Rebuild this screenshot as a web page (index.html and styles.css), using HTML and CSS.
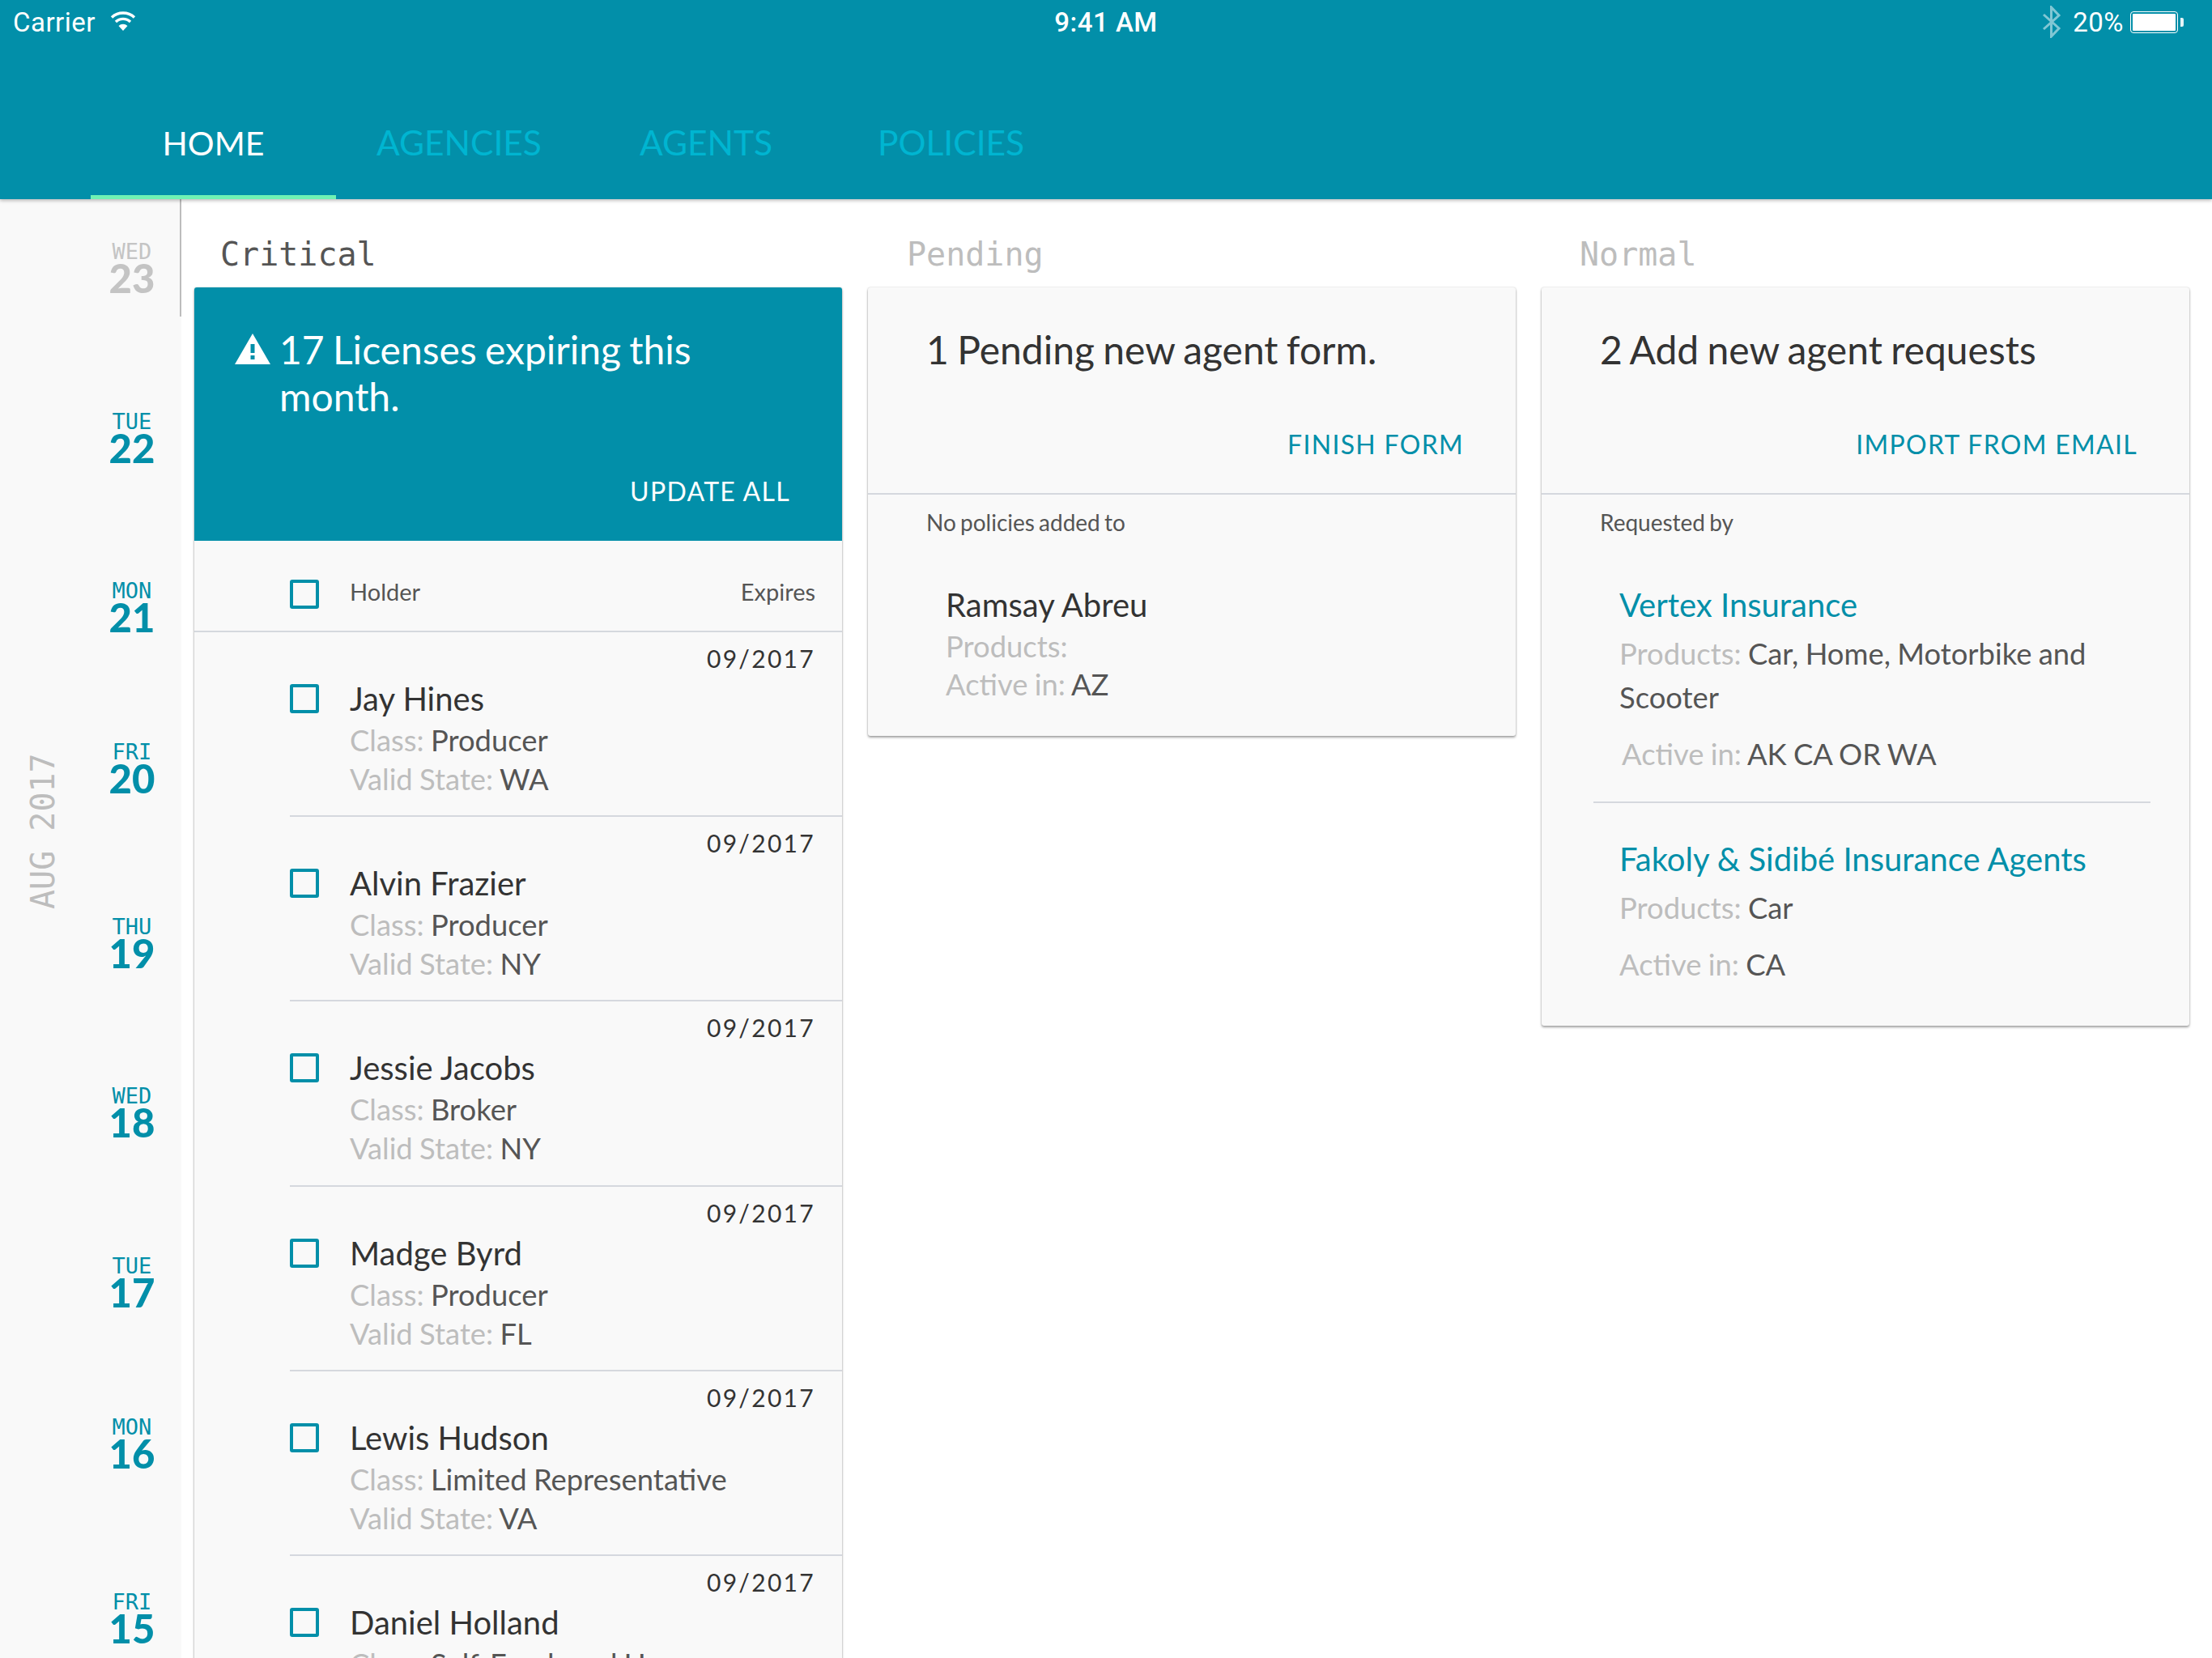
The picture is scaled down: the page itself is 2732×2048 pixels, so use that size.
FILE: index.html
```html
<!DOCTYPE html>
<html>
  <head>
    <meta name="viewport" content="width=device-width,initial-scale=1.0">
    <title>Home</title>
    <link rel="stylesheet" href="styles.css">
  </head>
  <body>
    <header class="topbar">
      <div class="status">
        <div class="status-left">
          <span>Carrier</span>
          <svg class="wifi" viewBox="0 0 32 24" width="32" height="24">
            <path d="M16 24 L10.5 18 A8 8 0 0 1 21.5 18 Z" fill="#fff"/>
            <path d="M7 13 A13 13 0 0 1 25 13" fill="none" stroke="#fff" stroke-width="3.4"/>
            <path d="M2 7.5 A20.5 20.5 0 0 1 30 7.5" fill="none" stroke="#fff" stroke-width="3.4"/>
          </svg>
        </div>
        <div class="status-time">9:41 AM</div>
        <div class="status-right">
          <svg class="bt" viewBox="0 0 24 40" width="24" height="40">
            <path d="M2 11 L21 28 L11.5 38 L11.5 2 L21 12 L2 29" fill="none" stroke="#fff" stroke-width="3"/>
          </svg>
          <span>20%</span>
          <div class="battery"><div class="battery-fill"></div></div>
          <div class="battery-nub"></div>
        </div>
      </div>
      <nav class="tabs">
        <a class="tab active">HOME</a>
        <a class="tab">AGENCIES</a>
        <a class="tab">AGENTS</a>
        <a class="tab">POLICIES</a>
      </nav>
    </header>

    <div class="main">
      <aside class="dates">
        <div class="month">AUG 2017</div>
        <div class="days">
          <div class="day past"><span>WED</span><b>23</b></div>
          <div class="day"><span>TUE</span><b>22</b></div>
          <div class="day"><span>MON</span><b>21</b></div>
          <div class="day"><span>FRI</span><b>20</b></div>
          <div class="day"><span>THU</span><b>19</b></div>
          <div class="day"><span>WED</span><b>18</b></div>
          <div class="day"><span>TUE</span><b>17</b></div>
          <div class="day"><span>MON</span><b>16</b></div>
          <div class="day"><span>FRI</span><b>15</b></div>
        </div>
      </aside>

      <div class="board">
        <section class="column">
          <h2 class="column-title critical">Critical</h2>
          <div class="card tall">
            <div class="card-head alert">
              <div class="head-title">
                <svg class="warn" viewBox="0 0 44 38" width="44" height="38">
                  <path d="M22 0 L44 38 L0 38 Z M19.5 13 L19.5 24 L24.5 24 L24.5 13 Z M19.5 27 L19.5 32 L24.5 32 L24.5 27 Z" fill="#fff" fill-rule="evenodd"/>
                </svg>
                <span>17 Licenses expiring this month.</span>
              </div>
              <a class="action">UPDATE ALL</a>
            </div>
            <div class="list-head">
              <i class="check"></i>
              <span class="holder">Holder</span>
              <span>Expires</span>
            </div>
            <div class="row">
              <div class="date">09/2017</div>
              <i class="check"></i>
              <div class="row-text">
                <div class="name">Jay Hines</div>
                <div class="meta"><em>Class:</em> Producer</div>
                <div class="meta"><em>Valid State:</em> WA</div>
              </div>
            </div>
            <div class="row">
              <div class="date">09/2017</div>
              <i class="check"></i>
              <div class="row-text">
                <div class="name">Alvin Frazier</div>
                <div class="meta"><em>Class:</em> Producer</div>
                <div class="meta"><em>Valid State:</em> NY</div>
              </div>
            </div>
            <div class="row">
              <div class="date">09/2017</div>
              <i class="check"></i>
              <div class="row-text">
                <div class="name">Jessie Jacobs</div>
                <div class="meta"><em>Class:</em> Broker</div>
                <div class="meta"><em>Valid State:</em> NY</div>
              </div>
            </div>
            <div class="row">
              <div class="date">09/2017</div>
              <i class="check"></i>
              <div class="row-text">
                <div class="name">Madge Byrd</div>
                <div class="meta"><em>Class:</em> Producer</div>
                <div class="meta"><em>Valid State:</em> FL</div>
              </div>
            </div>
            <div class="row">
              <div class="date">09/2017</div>
              <i class="check"></i>
              <div class="row-text">
                <div class="name">Lewis Hudson</div>
                <div class="meta"><em>Class:</em> Limited Representative</div>
                <div class="meta"><em>Valid State:</em> VA</div>
              </div>
            </div>
            <div class="row">
              <div class="date">09/2017</div>
              <i class="check"></i>
              <div class="row-text">
                <div class="name">Daniel Holland</div>
                <div class="meta"><em>Class:</em> Self-Employed User</div>
                <div class="meta"><em>Valid State:</em> NY</div>
              </div>
            </div>
          </div>
        </section>

        <section class="column">
          <h2 class="column-title">Pending</h2>
          <div class="card">
            <div class="card-head">
              <div class="head-title plain">1 Pending new agent form.</div>
              <a class="action teal">FINISH FORM</a>
            </div>
            <div class="card-body">
              <div class="note">No policies added to</div>
              <div class="agent">
                <div class="name">Ramsay Abreu</div>
                <div class="meta"><em>Products:</em></div>
                <div class="meta"><em>Active in:</em> AZ</div>
              </div>
            </div>
          </div>
        </section>

        <section class="column">
          <h2 class="column-title">Normal</h2>
          <div class="card">
            <div class="card-head">
              <div class="head-title plain">2 Add new agent requests</div>
              <a class="action teal">IMPORT FROM EMAIL</a>
            </div>
            <div class="card-body">
              <div class="note">Requested by</div>
              <div class="request">
                <div class="name link">Vertex Insurance</div>
                <div class="meta roomy"><em>Products:</em> Car, Home, Motorbike and Scooter</div>
                <div class="meta roomy nudged"><em>Active in:</em> AK CA OR WA</div>
              </div>
              <div class="request">
                <div class="name link">Fakoly &amp; Sidibé Insurance Agents</div>
                <div class="meta roomy"><em>Products:</em> Car</div>
                <div class="meta roomy"><em>Active in:</em> CA</div>
              </div>
            </div>
          </div>
        </section>
      </div>
    </div>
  </body>
</html>
```

FILE: styles.css
```css
html, body { margin: 0; height: 2048px; overflow: hidden; }
body { display: flex; flex-direction: column; background: #fff; font-family: Lato, "Open Sans", sans-serif; color: #333; }

/* top bar */
.topbar { flex: none; height: 246px; background: #028fa9; color: #fff; display: flex; flex-direction: column; box-shadow: 0 2px 4px rgba(0, 0, 0, 0.25); position: relative; z-index: 2; }
.status { height: 54px; display: grid; grid-template-columns: 1fr auto 1fr; align-items: center; padding: 0 16px; font-family: Roboto, sans-serif; font-size: 33px; letter-spacing: 0.5px; }
.status-left { display: flex; align-items: center; gap: 18px; }
.status-time { font-weight: 500; font-size: 33px; }
.status-right { display: flex; align-items: center; justify-content: flex-end; }
.bt { opacity: 0.5; margin-right: 14px; }
.battery { width: 59px; height: 27px; box-sizing: border-box; border: 1.5px solid #fff; border-radius: 4px; padding: 2px; margin-left: 8px; }
.battery-fill { height: 100%; background: #fff; border-radius: 1px; }
.battery-nub { width: 4px; height: 11px; background: #fff; margin: 0 19px 0 3px; border-radius: 0 2px 2px 0; opacity: 0.9; }
.wifi { margin-top: -2px; }
.tabs { flex: 1; display: flex; padding-left: 112px; }
.tab { display: flex; align-items: center; justify-content: center; height: 188px; box-sizing: border-box; padding: 54px 60.5px 0; font-size: 42.5px; color: #00b5d1; }
.tab.active { width: 303px; height: 192px; padding: 57px 0 0; border-bottom: 5px solid #6ff2b4; color: #fff; margin-right: -10.5px; font-size: 41px; }
.tab:last-child { margin-left: 9px; }

/* dates */
.main { flex: 1; display: flex; min-height: 0; overflow: hidden; }
.dates { flex: none; width: 224px; background: #f9f9f9; display: flex; position: relative; }
.dates::after { content: ""; position: absolute; right: 0; top: 0; width: 2px; height: 145px; background: #bdbdbd; }
.month { width: 106px; margin-top: 684px; height: 194px; font-family: "DejaVu Sans Mono", monospace; font-size: 40px; color: #bdbdbd; writing-mode: vertical-rl; transform: rotate(180deg); text-align: center; line-height: 106px; white-space: nowrap; }
.days { flex: 1; display: flex; flex-direction: column; align-items: flex-start; padding-top: 51px; }
.day { width: 114px; display: flex; flex-direction: column; align-items: center; color: #028fa9; }
.day span { font-family: "DejaVu Sans Mono", monospace; font-size: 27px; line-height: 28px; height: 24px; }
.day b { font-size: 49px; line-height: 44px; font-weight: 900; margin-bottom: 141.7px; }
.day:nth-child(4n) { margin-top: -11px; }
.day:nth-child(4n+5) { margin-top: 6px; }
.day.past { color: #c4c4c4; }

/* board */
.board { flex: 1; display: grid; grid-template-columns: 800px 800px 800px; gap: 32px; padding-left: 16px; align-items: start; min-width: 0; }
.column { display: flex; flex-direction: column; min-height: 0; }
.column-title { margin: 0; height: 109px; box-sizing: border-box; padding: 43px 0 0 32px; font-family: "DejaVu Sans Mono", monospace; font-size: 40px; line-height: 50px; font-weight: 400; color: #bdbdbd; }
.column-title.critical { color: #555; }
.column:nth-child(2) .column-title { padding-left: 48px; }
.column:nth-child(3) .column-title { padding-left: 47px; }

.card { background: #f9f9f9; border-radius: 3px; box-shadow: 0 2px 3px rgba(0, 0, 0, 0.35), 0 0 2px rgba(0, 0, 0, 0.2); }
.card.tall { border-radius: 3px 3px 0 0; }
.card-head { height: 256px; box-sizing: border-box; padding: 48px 64px 0 72px; border-bottom: 2px solid #d5d8de; display: flex; flex-direction: column; }
.card-head.alert { height: 313px; padding: 48px 64px 0 50px; background: #028fa9; color: #fff; border-bottom: 0; border-radius: 3px 3px 0 0; }
.head-title { font-size: 48px; line-height: 58px; word-spacing: -2px; display: flex; align-items: flex-start; gap: 11px; }
.head-title.plain { color: #333; }
.head-title span { width: 560px; }
.warn { flex: none; margin-top: 9px; }
.action { align-self: flex-end; margin-top: 68px; font-size: 32px; line-height: 40px; letter-spacing: 1.3px; color: #fff; }
.action.teal { color: #028fa9; }

.check { flex: none; width: 36px; height: 36px; box-sizing: border-box; border: 4px solid #028fa9; border-radius: 3px; display: block; }
.list-head { height: 113px; box-sizing: border-box; border-bottom: 2px solid #d5d8de; display: flex; align-items: center; padding: 14px 33px 0 118px; font-size: 29px; color: #555; }
.list-head .check { margin-top: 6px; }
.holder { flex: 1; margin-left: 38px; }
.row { height: 228.2px; box-sizing: border-box; margin-left: 118px; position: relative; display: flex; align-items: flex-start; padding-top: 64px; border-bottom: 2px solid #d5d8de; }
.row .check { margin-right: 38px; }
.date { position: absolute; right: 33px; top: 14px; font-size: 30px; line-height: 36px; letter-spacing: 2.3px; color: #333; }
.row-text { margin-top: -7px; }
.name { font-size: 40px; line-height: 50px; color: #333; margin-bottom: 2px; }
.name.link { color: #028fa9; margin-bottom: 0; }
.meta { font-size: 36.4px; line-height: 48px; color: #555; word-spacing: -1px; }
.meta em { font-style: normal; color: #bdbdbd; }
.meta.roomy { line-height: 54px; margin-top: 8px; }
.meta.roomy + .meta.roomy { margin-top: 16px; }
.meta.nudged { padding-left: 3px; }

.card-body { padding: 0 0 0 72px; }
.note { font-size: 28px; line-height: 36px; word-spacing: -2px; color: #555; padding-top: 16px; }
.agent { padding: 59px 0 40px 24px; }
.agent .name { margin-bottom: 3px; }
.agent .meta { line-height: 47px; }
.request { margin: 0 0 0 -8px; padding: 0 36px 0 32px; width: 688px; box-sizing: border-box; }
.request:nth-child(2) { padding-top: 59px; padding-bottom: 32px; border-bottom: 2px solid #d5d8de; }
.request:nth-child(3) { padding-top: 44px; padding-bottom: 49px; }
```
